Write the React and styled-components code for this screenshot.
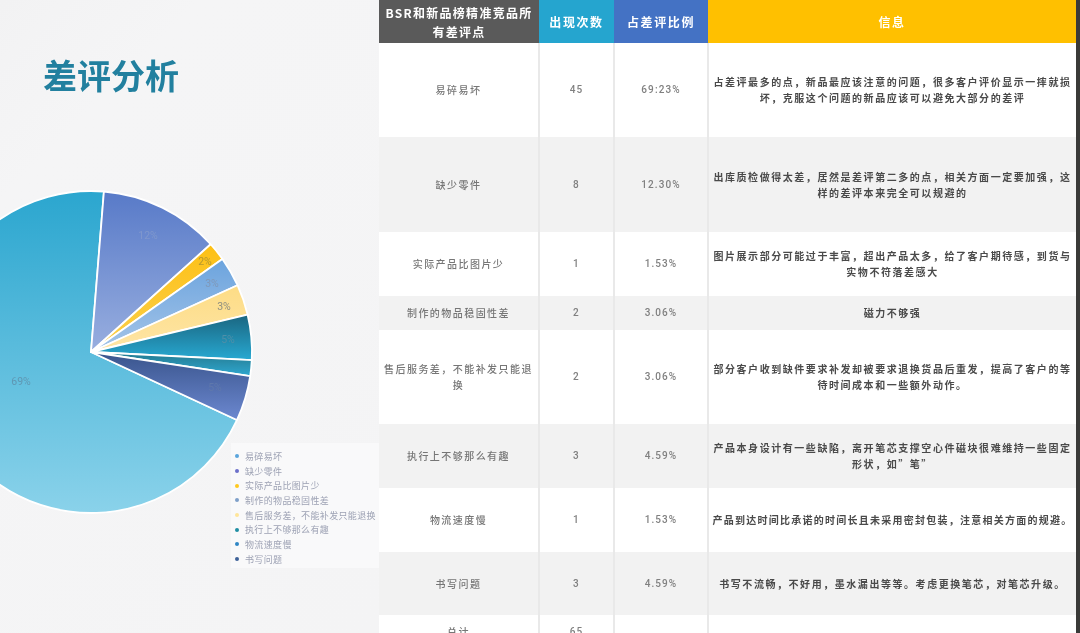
import React from "react";
import styled, { createGlobalStyle } from "styled-components";

const Global = createGlobalStyle`
  html, body { margin: 0; padding: 0; height: 100%; background: #f4f4f5; overflow: hidden; }
  #root { height: 100%; }
`;

const FONT = `"Noto Sans CJK SC", "Noto Sans", sans-serif`;

const Page = styled.div`
  display: flex;
  width: 1080px;
  height: 633px;
  overflow: hidden;
  font-family: ${FONT};
  filter: blur(0.45px);
`;

const LeftPanel = styled.section`
  position: relative;
  flex: 0 0 379px;
  display: flex;
  flex-direction: column;
  overflow: hidden;
  background: linear-gradient(135deg, #f2f2f3 0%, #f5f5f6 20%, #f4f4f5 100%);
`;

const Title = styled.h1`
  margin: 0;
  padding: 53px 0 0 43px;
  font-size: 34px;
  line-height: 44px;
  font-weight: 600;
  color: #22809f;
`;

const PieBox = styled.svg`
  display: block;
  flex: none;
  width: 326px;
  height: 326px;
  margin: 92px 0 0 -72px;
`;

const PieLabel = styled.text`
  font-family: "Roboto", sans-serif;
  font-size: 10.5px;
  text-anchor: middle;
  dominant-baseline: middle;
  fill: ${(p) => p.$fill};
`;

const Legend = styled.ul`
  position: absolute;
  left: 231px;
  top: 443px;
  width: 148px;
  height: 125px;
  margin: 0;
  padding: 6px 0 0 4px;
  box-sizing: border-box;
  list-style: none;
  background: #f9f9fa;
  overflow: hidden;
`;

const LegendItem = styled.li`
  display: flex;
  align-items: center;
  gap: 6px;
  height: 14.7px;
  font-size: 9px;
  letter-spacing: 0.35px;
  white-space: nowrap;
  color: #9da2b4;
`;

const Dot = styled.i`
  flex: none;
  width: 4px;
  height: 4px;
  border-radius: 50%;
  background: ${(p) => p.$color};
`;

const TableWrap = styled.main`
  flex: 0 0 697px;
  background: #fff;
  overflow: hidden;
`;

const Table = styled.table`
  width: 697px;
  table-layout: fixed;
  border-collapse: collapse;
  border-spacing: 0;
`;

const Head = styled.th`
  height: 43px;
  padding: 0 4px;
  box-sizing: border-box;
  font-size: 12px;
  line-height: 19px;
  font-weight: 700;
  letter-spacing: ${(p) => p.$ls ?? 1.6}px;
  color: #fff;
  text-align: center;
  background: ${(p) => p.$bg};
`;

const Row = styled.tr`
  height: ${(p) => p.$h}px;
  background: ${(p) => (p.$shade ? "#f2f2f2" : "#ffffff")};
`;

const Cell = styled.td`
  padding: 0 4px;
  box-sizing: border-box;
  text-align: center;
  vertical-align: middle;
  border-right: 2px solid #e9e9e9;
  font-size: 10px;
  line-height: 16px;
  font-weight: 500;
  letter-spacing: 1.45px;
  color: #767676;
`;

const NumberCell = styled(Cell)`
  font-family: "Roboto", sans-serif;
  font-size: 10px;
  font-weight: 500;
  letter-spacing: 1.1px;
  color: #808080;
`;

const InfoCell = styled.td`
  padding: 0 ${(p) => (p.$nowrap ? 0 : 4)}px;
  box-sizing: border-box;
  text-align: center;
  vertical-align: middle;
  font-size: 10px;
  line-height: 16px;
  font-weight: 700;
  letter-spacing: ${(p) => p.$ls ?? 1.55}px;
  white-space: ${(p) => (p.$nowrap ? "nowrap" : "normal")};
  color: #4a4a4a;
`;

const Edge = styled.aside`
  flex: 0 0 4px;
  background: #3a3a38;
`;

const slices = [
  { id: "a", from: -245, to: 4.6, c1: "#2ba6cf", c2: "#8ad2ea", name: "易碎易坏", dot: "#5aa5dc" },
  { id: "b", from: 4.6, to: 48, c1: "#587ac8", c2: "#98aedf", name: "缺少零件", dot: "#6c70ca" },
  { id: "c", from: 48, to: 54.7, c1: "#fdc015", c2: "#fbd04e", name: "实际产品比图片少", dot: "#ffc91f" },
  { id: "d", from: 54.7, to: 65.5, c1: "#6ca4de", c2: "#a4c4e8", name: "制作的物品稳固性差", dot: "#7fa0c9" },
  { id: "e", from: 65.5, to: 76.6, c1: "#fddc85", c2: "#fee5a6", name: "售后服务差，不能补发只能退换", dot: "#ffe69a" },
  { id: "f", from: 76.6, to: 92.9, c1: "#1a6580", c2: "#28a9d2", name: "执行上不够那么有趣", dot: "#1f8ea3" },
  { id: "g", from: 92.9, to: 98.6, c1: "#24798f", c2: "#2fa8d0", name: "物流速度慢", dot: "#3087c4" },
  { id: "h", from: 98.6, to: 115, c1: "#39548c", c2: "#6c88d0", name: "书写问题", dot: "#3f6299" },
];

const labels = [
  { x: -70, y: 30, t: "69%", f: "#5f97b3" },
  { x: 57, y: -116, t: "12%", f: "#7f97cd" },
  { x: 114, y: -90, t: "2%", f: "#b5982f" },
  { x: 121, y: -68, t: "3%", f: "#7f98b9" },
  { x: 133, y: -45, t: "3%", f: "#8f8f80" },
  { x: 137, y: -12, t: "5%", f: "#4f8fa8" },
  { x: 124, y: 36, t: "5%", f: "#5f78ac" },
];

const R = 161;
const point = (deg) => {
  const a = (deg * Math.PI) / 180;
  return `${(R * Math.sin(a)).toFixed(2)} ${(-R * Math.cos(a)).toFixed(2)}`;
};
const slicePath = ({ from, to }) =>
  `M0 0 L${point(from)} A${R} ${R} 0 ${to - from > 180 ? 1 : 0} 1 ${point(to)} Z`;

const rows = [
  { h: 94, name: "易碎易坏", n: "45", p: "69:23%", info: "占差评最多的点，新品最应该注意的问题，很多客户评价显示一摔就损坏，克服这个问题的新品应该可以避免大部分的差评" },
  { h: 95, name: "缺少零件", n: "8", p: "12.30%", info: "出库质检做得太差，居然是差评第二多的点，相关方面一定要加强，这样的差评本来完全可以规避的" },
  { h: 64, name: "实际产品比图片少", n: "1", p: "1.53%", info: "图片展示部分可能过于丰富，超出产品太多，给了客户期待感，到货与实物不符落差感大" },
  { h: 34, name: "制作的物品稳固性差", n: "2", p: "3.06%", info: "磁力不够强" },
  { h: 94, name: "售后服务差，不能补发只能退换", n: "2", p: "3.06%", info: "部分客户收到缺件要求补发却被要求退换货品后重发，提高了客户的等待时间成本和一些额外动作。" },
  { h: 64, name: "执行上不够那么有趣", n: "3", p: "4.59%", info: "产品本身设计有一些缺陷，离开笔芯支撑空心件磁块很难维持一些固定形状，如”笔”" },
  { h: 64, name: "物流速度慢", n: "1", p: "1.53%", info: "产品到达时间比承诺的时间长且未采用密封包装，注意相关方面的规避。", ls: 1.25, nowrap: true },
  { h: 63, name: "书写问题", n: "3", p: "4.59%", info: "书写不流畅，不好用，墨水漏出等等。考虑更换笔芯，对笔芯升级。" },
  { h: 34, name: "总计", n: "65", p: "", info: "" },
];

export default function App() {
  return (
    <Page>
      <Global />
      <LeftPanel>
        <Title>差评分析</Title>
        <PieBox viewBox="-163 -163 326 326" aria-label="差评占比饼图">
          <defs>
            {slices.map((s) => (
              <linearGradient key={s.id} id={`grad-${s.id}`} x1="0" y1="0" x2="0" y2="1">
                <stop offset="0" stopColor={s.c1} />
                <stop offset="1" stopColor={s.c2} />
              </linearGradient>
            ))}
          </defs>
          {slices.map((s) => (
            <path key={s.id} d={slicePath(s)} fill={`url(#grad-${s.id})`} stroke="#fff" strokeWidth="1.8" strokeLinejoin="round" />
          ))}
          {labels.map((l) => (
            <PieLabel key={`${l.x}-${l.y}`} x={l.x} y={l.y} $fill={l.f}>
              {l.t}
            </PieLabel>
          ))}
        </PieBox>
        <Legend>
          {slices.map((s) => (
            <LegendItem key={s.id}>
              <Dot $color={s.dot} />
              {s.name}
            </LegendItem>
          ))}
        </Legend>
      </LeftPanel>
      <TableWrap>
        <Table>
          <colgroup>
            <col style={{ width: 160 }} />
            <col style={{ width: 75 }} />
            <col style={{ width: 94 }} />
            <col style={{ width: 368 }} />
          </colgroup>
          <thead>
            <tr>
              <Head $bg="#5a5a5a" $ls={1.3}>BSR和新品榜精准竞品所有差评点</Head>
              <Head $bg="#25a5cf">出现次数</Head>
              <Head $bg="#4472c4">占差评比例</Head>
              <Head $bg="#ffc000">信息</Head>
            </tr>
          </thead>
          <tbody>
            {rows.map((r, i) => (
              <Row key={r.name} $h={r.h} $shade={i % 2 === 1}>
                <Cell>{r.name}</Cell>
                <NumberCell>{r.n}</NumberCell>
                <NumberCell>{r.p}</NumberCell>
                <InfoCell $ls={r.ls} $nowrap={r.nowrap}>{r.info}</InfoCell>
              </Row>
            ))}
          </tbody>
        </Table>
      </TableWrap>
      <Edge />
    </Page>
  );
}
